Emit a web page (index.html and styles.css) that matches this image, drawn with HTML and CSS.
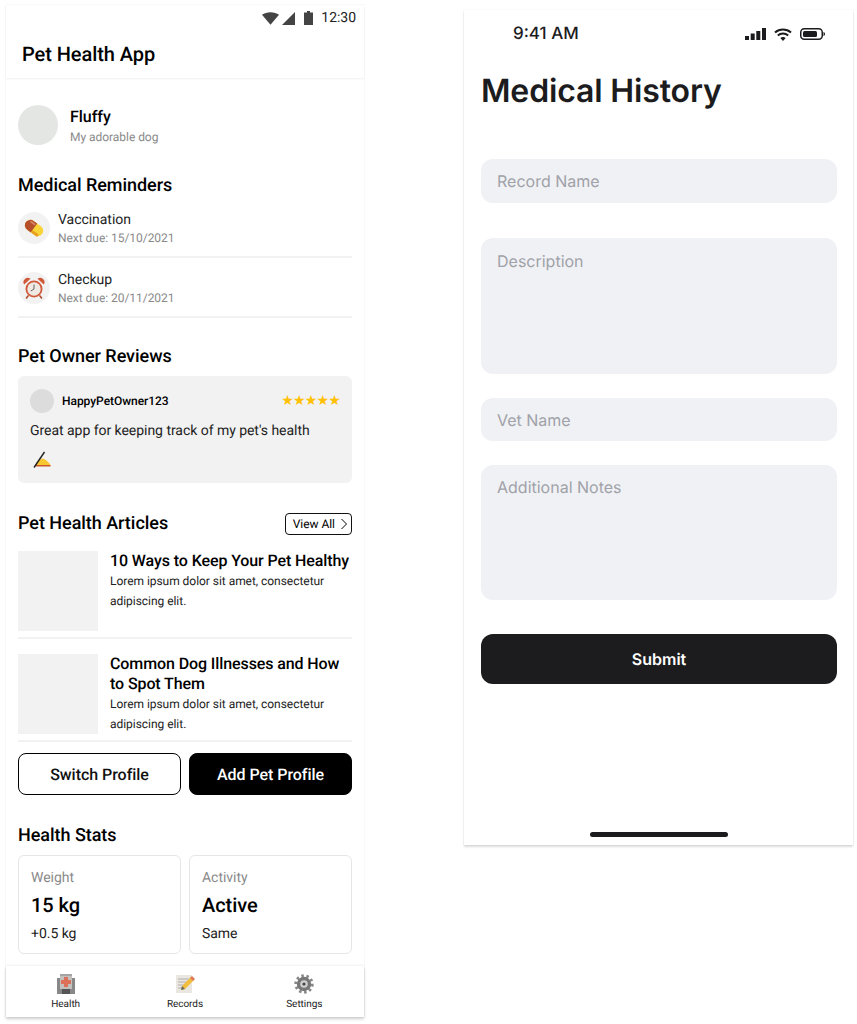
FILE: index.html
```html
<!DOCTYPE html>
<html>
<head>
    <title>Pet Health App</title>
    <link rel="stylesheet" href="styles.css">
</head>
<body>
    <div class="phone">
        <header class="app-header">
            <div class="status-bar">
                <svg class="status-icon wifi" width="17" height="13" viewBox="0 0 18 13"><path d="M0 2.600C2.400.9 5.600 0 9 0s6.600.9 9 2.600L9 13z" fill="#444"/></svg>
                <svg class="status-icon" width="13" height="13" viewBox="0 0 14 14"><path d="M14 0v14H0z" fill="#444"/></svg>
                <svg class="status-icon battery" width="9" height="14" viewBox="0 0 9 14"><path d="M3 0h3v1.500h3V14H0V1.500h3z" fill="#444"/></svg>
                <span>12:30</span>
            </div>
            <h1 class="app-title">Pet Health App</h1>
        </header>

        <main class="content">
            <div class="pet-row">
                <div class="pet-avatar"></div>
                <div class="pet-info">
                    <div class="pet-name">Fluffy</div>
                    <div class="pet-sub">My adorable dog</div>
                </div>
            </div>

            <h2 class="section-title reminders-title">Medical Reminders</h2>
            <div class="reminder">
                <div class="reminder-icon">
                    <svg width="22" height="22" viewBox="0 0 22 22">
                        <g transform="rotate(36 11 11)">
                            <rect x="1" y="5.500" width="20" height="11" rx="5.500" fill="#f8d438"/>
                            <path d="M11 5.500H6.500a5.500 5.500 0 0 0 0 11H11z" fill="#b5502b"/>
                            <rect x="11" y="13.500" width="8" height="3" rx="1.500" fill="#e8a020"/>
                            <rect x="4" y="7" width="6" height="1.500" rx=".75" fill="#d98a6a"/>
                        </g>
                    </svg>
                </div>
                <div>
                    <div class="reminder-name">Vaccination</div>
                    <div class="reminder-due">Next due: 15/10/2021</div>
                </div>
            </div>
            <div class="reminder">
                <div class="reminder-icon">
                    <svg width="22" height="22" viewBox="0 0 22 22">
                        <path d="M1.200 7.500A4.300 4.300 0 0 1 7.500 1.800zM20.800 7.500a4.300 4.300 0 0 0-6.300-5.700z" fill="#d0593a"/>
                        <path d="M5 19l-1.500 2M17 19l1.500 2" stroke="#b04a2e" stroke-width="1.600" stroke-linecap="round"/>
                        <circle cx="11" cy="12" r="8.500" fill="#d0593a"/>
                        <circle cx="11" cy="12" r="6.700" fill="#efe9e3"/>
                        <path d="M11 7.500V12l-3.200 2" stroke="#666" stroke-width="1" fill="none"/>
                    </svg>
                </div>
                <div>
                    <div class="reminder-name">Checkup</div>
                    <div class="reminder-due">Next due: 20/11/2021</div>
                </div>
            </div>

            <h2 class="section-title reviews-title">Pet Owner Reviews</h2>
            <div class="review-card">
                <div class="review-top">
                    <div class="review-avatar"></div>
                    <span class="review-user">HappyPetOwner123</span>
                    <span class="review-stars">★★★★★</span>
                </div>
                <p class="review-text">Great app for keeping track of my pet's health</p>
                <svg class="review-emoji" width="18" height="17" viewBox="0 0 18 17">
                    <path d="M2.500 14C3.500 10.500 6 8.500 9.500 7.500c2 .4 5 2.500 7.500 5.500l.5 2H3z" fill="#f8c630"/>
                    <path d="M2.500 14h15v1.500h-15z" fill="#c9562c"/>
                    <path d="M1 16.500L11.500 1" stroke="#222" stroke-width="1.400"/>
                </svg>
            </div>

            <div class="articles-head">
                <h2 class="section-title">Pet Health Articles</h2>
                <a class="view-all">View All
                    <svg width="8" height="12" viewBox="0 0 8 12"><path d="M1.500 1l5 5-5 5" fill="none" stroke="#000" stroke-width="1"/></svg>
                </a>
            </div>
            <div class="article">
                <div class="article-thumb"></div>
                <div>
                    <h3 class="article-title">10 Ways to Keep Your Pet Healthy</h3>
                    <p class="article-body">Lorem ipsum dolor sit amet, consectetur adipiscing elit.</p>
                </div>
            </div>
            <div class="article">
                <div class="article-thumb"></div>
                <div>
                    <h3 class="article-title">Common Dog Illnesses and How to Spot Them</h3>
                    <p class="article-body">Lorem ipsum dolor sit amet, consectetur adipiscing elit.</p>
                </div>
            </div>

            <div class="profile-buttons">
                <button class="btn btn-outline">Switch Profile</button>
                <button class="btn btn-solid">Add Pet Profile</button>
            </div>

            <h2 class="section-title stats-title">Health Stats</h2>
            <div class="stats">
                <div class="stat-card">
                    <div class="stat-label">Weight</div>
                    <div class="stat-value">15 kg</div>
                    <div class="stat-note">+0.5 kg</div>
                </div>
                <div class="stat-card">
                    <div class="stat-label">Activity</div>
                    <div class="stat-value">Active</div>
                    <div class="stat-note">Same</div>
                </div>
            </div>
        </main>

        <nav class="tabbar">
            <div class="tab">
                <svg width="20" height="20" viewBox="0 0 20 20">
                    <path d="M1 4h18v16H1z" fill="#888"/>
                    <path d="M4 0h12v4H4z" fill="#a5a5a5"/>
                    <path d="M4 2h12v13H4z" fill="#c4c0be"/>
                    <path d="M8 3h4v3h3v4h-3v3H8v-3H5V6h3z" fill="#dd7059"/>
                    <path d="M6 15h8v5H6z" fill="#555"/>
                </svg>
                <span>Health</span>
            </div>
            <div class="tab">
                <svg width="20" height="20" viewBox="0 0 20 20">
                    <path d="M1 1h16v18H1z" fill="#e9e7e0"/>
                    <path d="M3 5h11M3 8h9M3 11h6M3 14h5" stroke="#b0b0b0"/>
                    <path d="M6 16l1-4 9-9 3 3-9 9z" fill="#f2bd3c"/>
                    <path d="M15 4l2-2 3 3-2 2z" fill="#df7a58"/>
                    <path d="M6 16l1-4 3 3z" fill="#666"/>
                </svg>
                <span>Records</span>
            </div>
            <div class="tab">
                <svg width="20" height="20" viewBox="0 0 20 20">
                    <circle cx="10" cy="10" r="8.200" fill="none" stroke="#888" stroke-width="3" stroke-dasharray="2.500 2.600"/>
                    <circle cx="10" cy="10" r="7.200" fill="#777"/>
                    <circle cx="10" cy="10" r="3.800" fill="#cfcfcf"/>
                    <circle cx="10" cy="10" r="1.600" fill="#444"/>
                </svg>
                <span>Settings</span>
            </div>
        </nav>
    </div>

    <div class="form-screen">
        <div class="ios-status">
            <span class="ios-time">9:41 AM</span>
            <div class="ios-icons">
                <svg width="21" height="12" viewBox="0 0 21 12"><path d="M0 8h4v4H0zM5.700 5.500h4V12h-4zM11.300 3h4v9h-4zM17 0h4v12h-4z" fill="#1c1c1e"/></svg>
                <svg width="18" height="13" viewBox="0 0 18 13">
                    <path d="M1 4.500c4.500-4 11.500-4 16 0M3.800 7.500c3-2.600 7.400-2.600 10.400 0" fill="none" stroke="#1c1c1e" stroke-width="2"/>
                    <path d="M6.300 10L9 13l2.700-3c-1.600-1.300-3.800-1.300-5.400 0z" fill="#1c1c1e"/>
                </svg>
                <svg width="25" height="12" viewBox="0 0 25 12">
                    <rect x=".75" y=".75" width="21.500" height="10.500" rx="3.500" fill="none" stroke="#1c1c1e" stroke-width="1.500"/>
                    <rect x="3" y="3" width="14" height="6" rx="1.500" fill="#1c1c1e"/>
                    <path d="M23.500 4v4c.9-.3 1.500-1.100 1.500-2s-.6-1.700-1.500-2z" fill="#1c1c1e"/>
                </svg>
            </div>
        </div>
        <h1 class="form-title">Medical History</h1>
        <form class="record-form">
            <input class="field field-name" type="text" placeholder="Record Name">
            <textarea class="field field-desc" placeholder="Description"></textarea>
            <input class="field field-vet" type="text" placeholder="Vet Name">
            <textarea class="field field-notes" placeholder="Additional Notes"></textarea>
            <button class="submit" type="button">Submit</button>
        </form>
        <div class="home-bar"></div>
    </div>
</body>
</html>
```

FILE: styles.css
```css
* {
    box-sizing: border-box;
}
html, body {
    margin: 0;
    height: 1024px;
    overflow: hidden;
}
body {
    display: flex;
    align-items: flex-start;
    background-color: #fff;
    font-family: 'Roboto', sans-serif;
    color: #000;
    text-rendering: geometricPrecision;
}

/* Left phone */
.phone {
    width: 358px;
    height: 1012px;
    margin: 5px 0 0 6px;
    display: flex;
    flex-direction: column;
    background-color: #fff;
    letter-spacing: -0.04px;
    box-shadow: 0 0 1px rgba(0, 0, 0, 0.14);
}
.app-header {
    height: 73px;
    padding: 0 8px 0 16px;
    box-shadow: 0 1px 2px rgba(0, 0, 0, 0.06);
}
.status-bar {
    height: 26px;
    display: flex;
    align-items: center;
    justify-content: flex-end;
    font-size: 14px;
    color: #222;
}
.status-icon.wifi {
    margin-right: 3px;
}
.status-icon.battery {
    margin: 0 8px 0 9px;
}
.app-title {
    margin: 9px 0 0;
    font-size: 20px;
    line-height: 28px;
    font-weight: 500;
    letter-spacing: -0.07px;
}
.content {
    flex: 1;
    padding: 0 12px;
    overflow: hidden;
}
.pet-row {
    display: flex;
    align-items: center;
    gap: 12px;
    height: 40px;
    margin-top: 27px;
}
.pet-avatar {
    width: 40px;
    height: 40px;
    border-radius: 50%;
    background-color: #e4e6e4;
}
.pet-info {
    padding-top: 2px;
}
.pet-name {
    font-size: 16px;
    line-height: 22px;
    font-weight: 500;
}
.pet-sub {
    font-size: 12px;
    line-height: 18px;
    color: #8a8a8a;
}
.section-title {
    margin: 0;
    font-size: 18px;
    line-height: 24px;
    font-weight: 500;
}
.reminders-title {
    margin-top: 29px;
}
.reminder {
    display: flex;
    align-items: center;
    gap: 8px;
    height: 60px;
    padding-top: 1px;
    border-bottom: 2px solid #f2f2f2;
}
.reminder-icon {
    width: 32px;
    height: 32px;
    border-radius: 50%;
    background-color: #f2f2f2;
    display: flex;
    align-items: center;
    justify-content: center;
}
.reminder-name {
    font-size: 14px;
    line-height: 20px;
    color: #222;
}
.reminder-due {
    font-size: 12px;
    line-height: 16px;
    color: #8a8a8a;
}
.reviews-title {
    margin-top: 27px;
}
.review-card {
    margin-top: 7px;
    height: 107px;
    padding: 13px 12px 12px;
    border-radius: 6px;
    background-color: #f2f2f2;
}
.review-top {
    display: flex;
    align-items: center;
    gap: 8px;
}
.review-avatar {
    width: 24px;
    height: 24px;
    border-radius: 50%;
    background-color: #dcdcdc;
}
.review-user {
    flex: 1;
    font-size: 12px;
    font-weight: 500;
}
.review-stars {
    font-family: 'DejaVu Sans', sans-serif;
    font-size: 14px;
    line-height: 20px;
    letter-spacing: -0.8px;
    color: #ffc107;
}
.review-text {
    margin: 8px 0 0;
    font-size: 14px;
    line-height: 20px;
    color: #222;
}
.review-emoji {
    display: block;
    margin: 10px 0 0 3px;
}
.articles-head {
    display: flex;
    align-items: center;
    justify-content: space-between;
    margin-top: 29px;
}
.view-all {
    display: flex;
    align-items: center;
    gap: 5px;
    height: 22px;
    padding: 0 3px 0 7px;
    border: 1px solid #111;
    border-radius: 4px;
    font-size: 12px;
}
.article {
    display: flex;
    gap: 12px;
    height: 103px;
    padding-top: 15px;
    border-bottom: 2px solid #f2f2f2;
}
.article-thumb {
    width: 80px;
    height: 80px;
    flex-shrink: 0;
    background-color: #f2f2f2;
}
.article-title {
    margin: 0;
    font-size: 16px;
    line-height: 20px;
    font-weight: 500;
    letter-spacing: -0.1px;
}
.article-body {
    margin: 0;
    font-size: 12px;
    line-height: 20px;
    color: #222;
}
.profile-buttons {
    display: flex;
    gap: 8px;
    margin-top: 11px;
}
.btn {
    flex: 1;
    height: 42px;
    border: 1px solid #000;
    border-radius: 8px;
    font-family: inherit;
    font-size: 16px;
    font-weight: 500;
    letter-spacing: inherit;
    text-rendering: inherit;
}
.btn-outline {
    background-color: #fff;
    color: #111;
}
.btn-solid {
    background-color: #000;
    color: #fff;
}
.stats-title {
    margin-top: 29px;
}
.stats {
    display: flex;
    gap: 8px;
    margin-top: 7px;
}
.stat-card {
    flex: 1;
    height: 99px;
    padding: 12px;
    border: 1px solid #e6e6e6;
    border-radius: 6px;
}
.stat-label {
    font-size: 14px;
    line-height: 20px;
    color: #8a8a8a;
}
.stat-value {
    margin-top: 3px;
    font-size: 20px;
    line-height: 28px;
    font-weight: 500;
}
.stat-note {
    margin-top: 5px;
    font-size: 14px;
    line-height: 20px;
    color: #222;
}
.tabbar {
    height: 51px;
    display: flex;
    box-shadow: 0 -1px 2px rgba(0, 0, 0, 0.05), 0 2px 3px rgba(0, 0, 0, 0.2);
}
.tab {
    flex: 1;
    display: flex;
    flex-direction: column;
    align-items: center;
    padding-top: 8px;
    font-size: 10px;
    line-height: 14px;
    color: #222;
}
.tab svg {
    margin-bottom: 4px;
}

/* Right screen */
.form-screen {
    position: relative;
    width: 389px;
    height: 835px;
    margin: 10px 0 0 100px;
    padding: 0 16px 0 17px;
    font-family: 'Inter', sans-serif;
    background-color: #fff;
    box-shadow: 0 0 1px rgba(0, 0, 0, 0.12), 0 2px 2px rgba(0, 0, 0, 0.14);
}
.ios-status {
    display: flex;
    align-items: center;
    justify-content: space-between;
    height: 46px;
    padding: 0 12px 0 32px;
}
.ios-time {
    margin-top: 2px;
    font-size: 17px;
    font-weight: 500;
    color: #1c1c1e;
}
.ios-icons {
    display: flex;
    align-items: center;
    gap: 8px;
    padding-top: 2px;
}
.form-title {
    margin: 13px 0 0;
    font-size: 32px;
    line-height: 44px;
    font-weight: 600;
    letter-spacing: -0.15px;
    color: #1c1c1e;
}
.record-form {
    display: flex;
    flex-direction: column;
    margin-top: 46px;
}
.field {
    display: block;
    width: 100%;
    padding: 12px 16px;
    border: none;
    outline: none;
    resize: none;
    border-radius: 12px;
    background-color: #f0f1f5;
    font-family: inherit;
    font-size: 16px;
    line-height: 20px;
    color: #1c1c1e;
    text-rendering: inherit;
}
.field::placeholder {
    color: #a0a2a8;
}
.field-name {
    height: 44px;
}
.field-desc {
    height: 136px;
    margin-top: 35px;
    padding-top: 13px;
}
.field-vet {
    height: 43px;
    margin-top: 24px;
}
.field-notes {
    height: 135px;
    margin-top: 24px;
}
.submit {
    height: 50px;
    margin-top: 34px;
    border: none;
    border-radius: 12px;
    background-color: #1c1c1e;
    color: #fff;
    font-family: inherit;
    font-size: 16px;
    font-weight: 600;
    text-rendering: inherit;
}
.home-bar {
    position: absolute;
    left: 126px;
    bottom: 8px;
    width: 138px;
    height: 5px;
    border-radius: 3px;
    background-color: #1c1c1e;
}
```
